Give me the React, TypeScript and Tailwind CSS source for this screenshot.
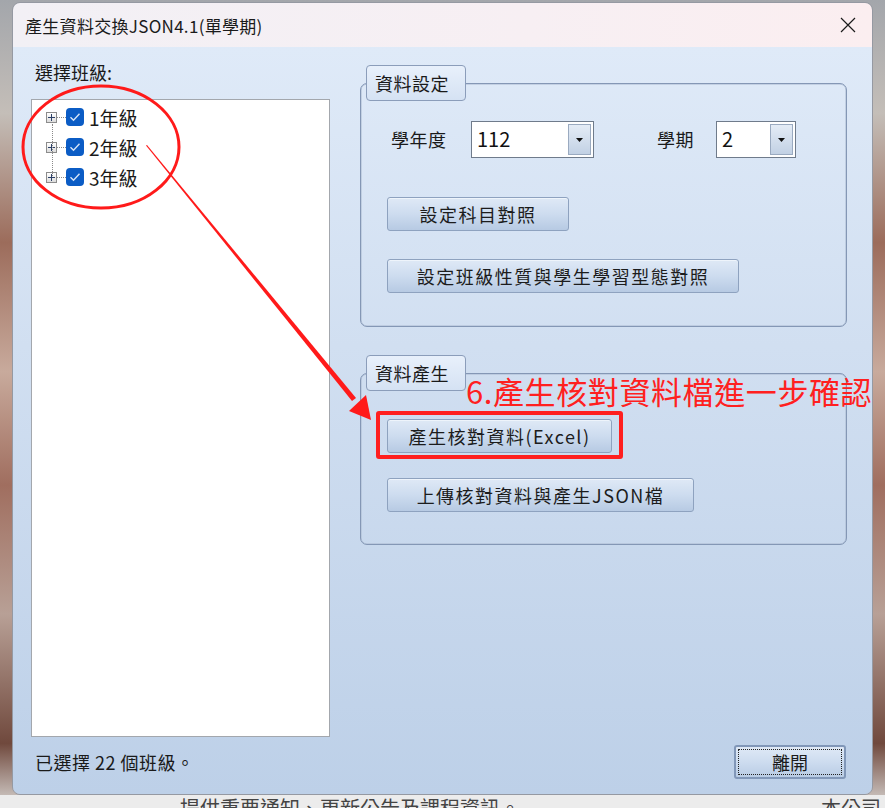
import React from 'react'

const font = "font-['Noto_Sans_CJK_TC','Noto_Sans',sans-serif]"

function WinButton({label, className}: {label: string; className: string}) {
  return (
    <button
      className={`h-[34px] rounded-[3px] border border-[#8ea2bf] bg-[linear-gradient(180deg,#dfe9f6_0%,#cddcef_50%,#b7cae3_100%)] text-[18px] leading-none tracking-[1.5px] text-[#1c1c1c] shadow-[inset_0_1px_0_#eef4fb] ${className}`}
    >
      {label}
    </button>
  )
}

function Combo({value, className}: {value: string; className: string}) {
  return (
    <div className={`flex h-[37px] border border-[#6f7b8b] bg-white p-[2px] ${className}`}>
      <span className="flex-1 pl-[3px] text-[20px] leading-[30px] text-[#111]">{value}</span>
      <span className="flex w-[23px] items-center justify-center border border-[#9aaac0] bg-[linear-gradient(180deg,#e4ecf6_0%,#c2d1e4_100%)]">
        <svg width="7" height="4" viewBox="0 0 7 4">
          <path d="M0 0h7L3.5 4z" fill="#111" />
        </svg>
      </span>
    </div>
  )
}

function GroupLabel({text}: {text: string}) {
  return (
    <div className="relative z-10 ml-[6px] flex h-[36px] w-[100px] items-center rounded-[4px] border border-[#8b9dba] bg-[linear-gradient(180deg,#e8f0fb_0%,#d5e2f3_100%)] pl-[8px] text-[18px] tracking-[0.5px] text-[#1a1a1a]">
      {text}
    </div>
  )
}

function TreeRow({label}: {label: string}) {
  return (
    <div className="flex h-[30px] items-center">
      <span className="flex h-[11px] w-[11px] items-center justify-center border border-[#8c8c8c] bg-[linear-gradient(180deg,#ffffff_0%,#dcdcdc_100%)]">
        <svg width="7" height="7" viewBox="0 0 7 7">
          <path d="M0 3.5h7M3.5 0v7" stroke="#2b3f66" strokeWidth="1" />
        </svg>
      </span>
      <span className="w-[9px] border-t border-dotted border-[#8a8a8a]" />
      <span className="flex h-[18px] w-[18px] items-center justify-center rounded-[4px] bg-[#0b5cc5]">
        <svg width="12" height="10" viewBox="0 0 12 10">
          <path d="M1.5 5.2l3 3L10.5 1.8" stroke="#d6e4f7" strokeWidth="1.4" fill="none" />
        </svg>
      </span>
      <span className="ml-[5px] text-[19px] leading-none text-[#1a1a1a]">{label}</span>
    </div>
  )
}

export default function App() {
  return (
    <div
      className={`relative flex h-[808px] w-[885px] flex-col overflow-hidden bg-[linear-gradient(180deg,#a3a6ab_0%,#c4beb8_14%,#9c6c5b_30%,#c8aa9c_46%,#a06e5f_60%,#b8a096_76%,#70493d_92%,#d9d6d3_100%)] ${font}`}
    >
      {/* dialog window */}
      <div className="ml-[12px] mt-[2px] flex h-[793px] w-[861px] flex-col overflow-hidden rounded-[8px] border border-[#9599a2]">
        <div className="flex h-[44px] items-center justify-between bg-[linear-gradient(90deg,#f2f0f5_0%,#f7eff3_60%,#fbeef0_100%)] pl-[12px] pr-[16px]">
          <span className="text-[17px] leading-none tracking-[0.3px] text-[#1b1b1b]">產生資料交換JSON4.1(單學期)</span>
          <svg width="16" height="16" viewBox="0 0 16 16">
            <path d="M1 1l14 14M15 1L1 15" stroke="#1b1b1b" strokeWidth="1.2" />
          </svg>
        </div>

        <div className="flex flex-1 flex-col bg-[linear-gradient(180deg,#dfeaf8_0%,#d1dff1_40%,#bdd0e8_100%)]">
          <div className="flex">
            {/* class picker */}
            <div className="flex flex-col pl-[18px]">
              <div className="ml-[4px] mt-[15px] h-[20px] text-[18px] leading-[20px] text-[#1a1a1a]">選擇班級:</div>
              <div className="relative mt-[17px] h-[638px] w-[299px] border border-[#a3a7ad] bg-white pl-[14px] pt-[2px]">
                <div className="absolute left-[20px] top-[24px] h-[52px] border-l border-dotted border-[#8a8a8a]" />
                <TreeRow label="1年級" />
                <TreeRow label="2年級" />
                <TreeRow label="3年級" />
              </div>
            </div>

            {/* settings */}
            <div className="ml-[30px] flex w-[487px] flex-col pt-[18px]">
              <GroupLabel text="資料設定" />
              <div className="-mt-[18px] flex h-[244px] flex-col rounded-[7px] border border-[#8497b5] pl-[26px] pt-[37px] shadow-[inset_0_0_0_0.5px_#a9b8cf]">
                <div className="flex items-center">
                  <span className="ml-[4px] w-[80px] text-[18px] tracking-[0.5px] text-[#1a1a1a]">學年度</span>
                  <Combo value="112" className="w-[123px]" />
                  <span className="ml-[63px] w-[59px] text-[18px] tracking-[0.5px] text-[#1a1a1a]">學期</span>
                  <Combo value="2" className="w-[80px]" />
                </div>
                <WinButton label="設定科目對照" className="mt-[39px] w-[182px]" />
                <WinButton label="設定班級性質與學生學習型態對照" className="mt-[28px] w-[352px]" />
              </div>

              <div className="relative mt-[28px] flex flex-col">
                <GroupLabel text="資料產生" />
                <div className="-mt-[18px] flex h-[172px] flex-col rounded-[7px] border border-[#8497b5] pl-[26px] pt-[45px] shadow-[inset_0_0_0_0.5px_#a9b8cf]">
                  <div className="relative w-[225px]">
                    <WinButton label="產生核對資料(Excel)" className="w-[225px]" />
                    <div className="absolute -left-[11px] -top-[8px] h-[48px] w-[247px] rounded-[3px] border-[4px] border-[#ff1f1f]" />
                  </div>
                  <WinButton label="上傳核對資料與產生JSON檔" className="mt-[25px] w-[307px]" />
                </div>
                <div className="absolute left-[106px] top-[19px] whitespace-nowrap text-[31px] leading-[34px] tracking-[0.6px] text-[#ff2020]">
                  6.產生核對資料檔進一步確認
                </div>
              </div>
            </div>
          </div>

          <div className="flex items-center justify-between pl-[22px] pr-[26px] pt-[8px]">
            <span className="text-[18px] leading-none tracking-[0.5px] text-[#1a1a1a]">已選擇 22 個班級。</span>
            <button className="h-[34px] w-[112px] rounded-[3px] border-2 border-[#8197b8] bg-[linear-gradient(180deg,#dfe9f6_0%,#cddcef_50%,#b9cce4_100%)] text-[18px] leading-none text-[#1a1a1a] outline-1 outline-dotted outline-[#222] outline-offset-[-5px]">
              離開
            </button>
          </div>
        </div>
      </div>

      {/* page behind the dialog */}
      <div className="flex h-[13px] items-start justify-between overflow-hidden bg-[#ececec] pl-[180px] pr-[4px]">
        <span className="pt-[3px] text-[20px] leading-[20px] text-[#444]">提供重要通知、更新公告及課程資訊。</span>
        <span className="pt-[3px] text-[20px] leading-[20px] text-[#444]">本公司</span>
      </div>

      {/* annotations */}
      <svg className="pointer-events-none absolute left-0 top-0" width="885" height="808" viewBox="0 0 885 808">
        <ellipse cx="101" cy="147" rx="78" ry="61" fill="none" stroke="#ff1a1a" strokeWidth="3" />
        <polygon points="146,145.5 147,145 356,398 352,401" fill="#ff1a1a" />
        <polygon points="349,411 371,420 366,395" fill="#ff1a1a" />
      </svg>
    </div>
  )
}
